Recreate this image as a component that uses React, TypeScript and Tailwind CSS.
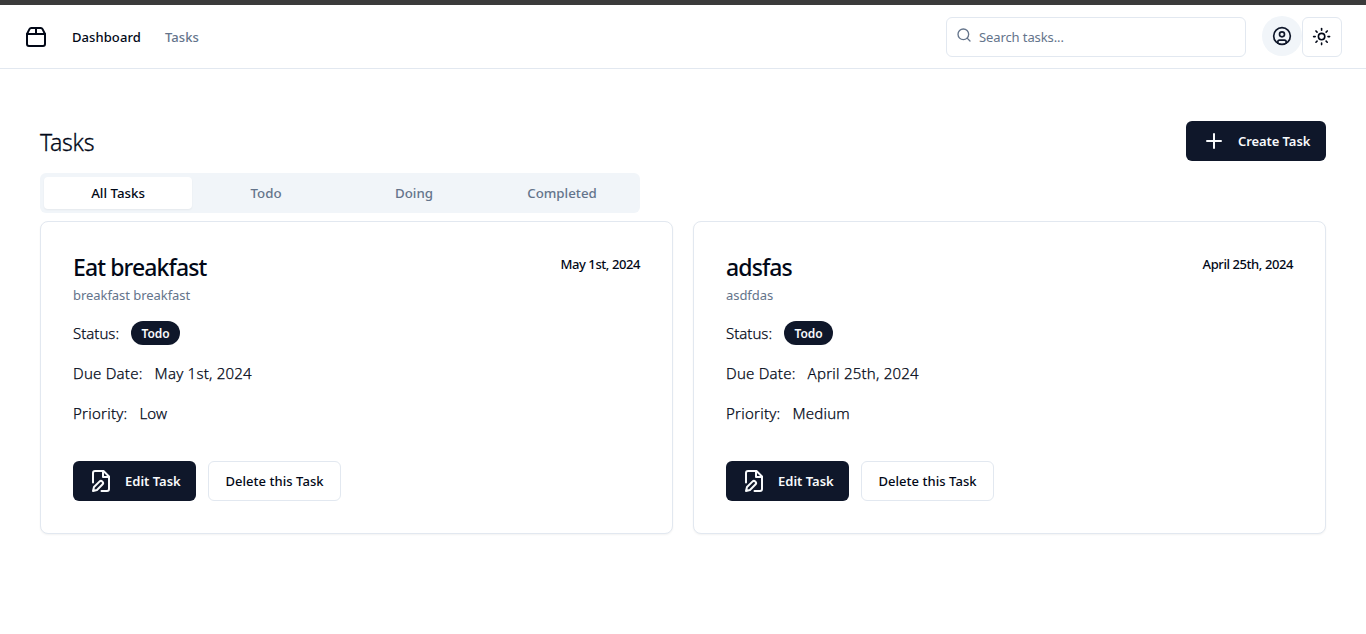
import React from "react";

type IconProps = { className?: string; children: React.ReactNode };

function Icon({ className, children }: IconProps) {
  return (
    <svg
      viewBox="0 0 24 24"
      fill="none"
      stroke="currentColor"
      strokeWidth={2}
      strokeLinecap="round"
      strokeLinejoin="round"
      className={className}
    >
      {children}
    </svg>
  );
}

const PackageIcon = () => (
  <Icon className="size-6 shrink-0">
    <path d="M3 9h18v10a2 2 0 0 1-2 2H5a2 2 0 0 1-2-2V9Z" />
    <path d="m3 9 2.45-4.9A2 2 0 0 1 7.24 3h9.52a2 2 0 0 1 1.8 1.1L21 9" />
    <path d="M12 3v6" />
  </Icon>
);

const SearchIcon = () => (
  <Icon className="-mt-1 size-4 shrink-0 text-[#64748b]">
    <circle cx="11" cy="11" r="8" />
    <path d="m21 21-4.3-4.3" />
  </Icon>
);

const UserIcon = () => (
  <Icon className="size-5">
    <circle cx="12" cy="12" r="10" />
    <circle cx="12" cy="10" r="3" />
    <path d="M7 20.662V19a2 2 0 0 1 2-2h6a2 2 0 0 1 2 2v1.662" />
  </Icon>
);

const SunIcon = () => (
  <Icon className="size-[19.2px]">
    <circle cx="12" cy="12" r="4" />
    <path d="M12 2v2" />
    <path d="M12 20v2" />
    <path d="m4.93 4.93 1.41 1.41" />
    <path d="m17.66 17.66 1.41 1.41" />
    <path d="M2 12h2" />
    <path d="M20 12h2" />
    <path d="m6.34 17.66-1.41 1.41" />
    <path d="m19.07 4.93-1.41 1.41" />
  </Icon>
);

const PlusIcon = () => (
  <Icon className="mr-3 size-6">
    <path d="M5 12h14" />
    <path d="M12 5v14" />
  </Icon>
);

const FileEditIcon = () => (
  <Icon className="mr-3 size-6">
    <path d="M4 13.5V4a2 2 0 0 1 2-2h8.5L20 7.5V20a2 2 0 0 1-2 2h-5.5" />
    <path d="M14 2v6h6" />
    <path d="M10.42 12.61a2.1 2.1 0 1 1 2.97 2.97L7.95 21 4 22l.99-3.95 5.43-5.44Z" />
  </Icon>
);

type Task = {
  title: string;
  description: string;
  due: string;
  priority: string;
};

const tasks: Task[] = [
  { title: "Eat breakfast", description: "breakfast breakfast", due: "May 1st, 2024", priority: "Low" },
  { title: "adsfas", description: "asdfdas", due: "April 25th, 2024", priority: "Medium" },
];

function Row({ children }: { children: React.ReactNode }) {
  return (
    <div className="mt-4 flex h-6 items-center gap-3 text-[15px] font-light tracking-[0.23px] [-webkit-text-stroke:0.25px]">
      {children}
    </div>
  );
}

function TaskCard({ task }: { task: Task }) {
  return (
    <article className="h-[313px] rounded-lg border border-[#e2e8f0] bg-white p-8 shadow-xs">
      <div className="flex justify-between">
        <div>
          <h2 className="h-[27px] text-[23px] leading-[27px] font-medium tracking-[-0.88px]">{task.title}</h2>
          <p className="mt-1 text-[13px] leading-5 tracking-[-0.05px] text-[#64748b]">{task.description}</p>
        </div>
        <time className="h-5 text-[13px] leading-5 font-medium tracking-[-0.42px]">{task.due}</time>
      </div>
      <Row>
        <span className="w-[46px] whitespace-nowrap tracking-[0px]">Status:</span>
        <span className="flex h-6 w-[49px] items-center justify-center rounded-full bg-[#0f172a] pt-px text-xs font-semibold tracking-[-0.1px] text-[#f8fafc] [-webkit-text-stroke:0]">
          Todo
        </span>
      </Row>
      <Row>
        <span>Due Date:</span>
        <span>{task.due}</span>
      </Row>
      <Row>
        <span>Priority:</span>
        <span>{task.priority}</span>
      </Row>
      <div className="mt-9 flex gap-3">
        <button className="flex h-10 w-[123px] items-center rounded-md bg-[#0f172a] pl-4 text-[13px] font-semibold whitespace-nowrap text-[#f8fafc]">
          <FileEditIcon />
          <span className="pt-px">Edit Task</span>
        </button>
        <button className="flex h-10 w-[133px] items-center justify-center rounded-md border border-[#e2e8f0] text-[13px] font-medium whitespace-nowrap">
          <span className="pt-0.5 tracking-[0.05px]">Delete this Task</span>
        </button>
      </div>
    </article>
  );
}

const tabs = ["All Tasks", "Todo", "Doing", "Completed"];

export default function App() {
  return (
    <div className="h-[634px] overflow-hidden bg-white font-['Noto_Sans',sans-serif] text-[#020817]">
      <div className="h-[5px] bg-[#3b3b3b]" />
      <header className="flex h-16 items-center border-b border-[#e2e8f0] px-6">
        <PackageIcon />
        <nav className="ml-6 flex gap-6 pt-px text-[13px] leading-5 font-medium tracking-[0.08px]">
          <a>Dashboard</a>
          <a className="text-[#64748b]">Tasks</a>
        </nav>
        <div className="ml-auto flex h-10 w-[300px] items-center gap-[7px] rounded-md border border-[#e2e8f0] pl-[9px] text-[13px] text-[#64748b]">
          <SearchIcon />
          <span className="pt-0.5 tracking-[-0.1px]">Search tasks...</span>
        </div>
        <button className="mb-0.5 ml-4 flex size-10 items-center justify-center rounded-full bg-[#f1f5f9] text-[#0f172a]">
          <UserIcon />
        </button>
        <button className="flex size-10 items-center justify-center rounded-md border border-[#e2e8f0]">
          <SunIcon />
        </button>
      </header>
      <main className="px-10 pt-[52px]">
        <div className="flex h-[52px] items-start justify-between">
          <h1 className="pt-[5px] text-[23px] leading-8 font-light tracking-[-0.3px] [-webkit-text-stroke:0.3px]">
            Tasks
          </h1>
          <button className="flex h-10 w-[140px] items-center rounded-md bg-[#0f172a] pl-4 text-[13px] font-semibold whitespace-nowrap text-[#f8fafc]">
            <PlusIcon />
            <span className="pt-px tracking-[-0.08px]">Create Task</span>
          </button>
        </div>
        <div className="grid h-10 w-[600px] grid-cols-4 rounded-md bg-[#f1f5f9] p-1 text-[13.3px] font-medium text-[#64748b]">
          {tabs.map((tab, i) => (
            <button
              key={tab}
              className={
                i === 0
                  ? "flex items-center justify-center rounded-sm bg-white pt-0.5 text-[#020817] shadow-xs"
                  : "flex items-center justify-center rounded-sm pt-0.5"
              }
            >
              {tab}
            </button>
          ))}
        </div>
        <section className="mt-2 grid grid-cols-2 gap-5">
          {tasks.map((task) => (
            <TaskCard key={task.title} task={task} />
          ))}
        </section>
      </main>
    </div>
  );
}
